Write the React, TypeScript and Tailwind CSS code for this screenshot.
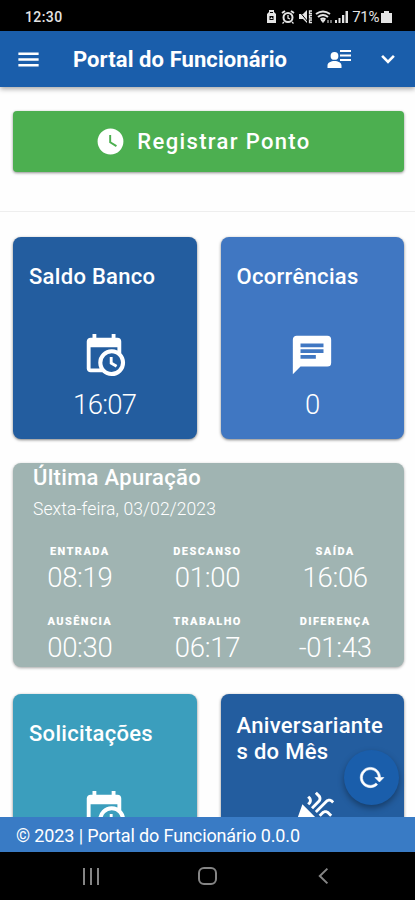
import type { ReactNode } from 'react';

const icons = {
  menu: 'M3,5.700H21V8H3V5.700M3,10.850H21V13.150H3V10.850M3,16H21V18.300H3V16Z',
  chevronDown: 'M7.41,8.28L12,12.87L16.59,8.28L18.300,10L12,16.300L5.700,10L7.41,8.28Z',
  chevronLeft: 'M15.4 4.6 L7.8 12 L15.4 19.4',
  account:
    'M13,3H24V5H13V3M13,7.500H24V9.500H13V7.500M13,12H24V14H13V12M7.500,5A3.900,3.900 0 0,1 11.400,8.900A3.900,3.900 0 0,1 7.500,12.800A3.900,3.900 0 0,1 3.600,8.900A3.900,3.900 0 0,1 7.500,5M0.500,21V18.500C0.500,15.600 4,14 7.500,14C11,14 14.500,15.600 14.500,18.500V21H0.500Z',
  clock:
    'M12,2A10,10 0 0,0 2,12A10,10 0 0,0 12,22A10,10 0 0,0 22,12A10,10 0 0,0 12,2M16.2,16.2L11,13V7H12.5V12.2L17,14.9L16.2,16.2Z',
  calendarClock:
    'M15,13H16.5V15.82L18.94,17.23L18.19,18.53L15,16.69V13M19,8H5V19H9.67C9.24,18.09 9,17.07 9,16A7,7 0 0,1 16,9C17.07,9 18.09,9.24 19,9.67V8M5,21C3.89,21 3,20.1 3,19V5C3,3.89 3.89,3 5,3H6V1H8V3H16V1H18V3H19A2,2 0 0,1 21,5V11.1C22.24,12.36 23,14.09 23,16A7,7 0 0,1 16,23C14.09,23 12.36,22.24 11.1,21H5M16,11.15A4.85,4.85 0 0,0 11.15,16C11.15,18.68 13.32,20.85 16,20.85A4.85,4.85 0 0,0 20.85,16C20.85,13.32 18.68,11.15 16,11.15Z',
  message:
    'M20,2A2,2 0 0,1 22,4V16A2,2 0 0,1 20,18H6L2,22V4C2,2.89 2.9,2 4,2H20M6,6V8H18V6H6M6,9V11H18V9H6M6,12V14H14V12H6Z',
  party:
    'M2,22L7,8L16,17L2,22M14.53,12.53L20.12,6.94C20.61,6.45 21.4,6.45 21.89,6.94L22.48,7.53L23.54,6.47L22.95,5.88C21.88,4.81 20.13,4.81 19.06,5.88L13.47,11.47L14.53,12.53M10.06,6.88L9.47,7.47L10.53,8.53L11.12,7.94C12.19,6.87 12.19,5.12 11.12,4.05L10.53,3.46L9.47,4.54L10.06,5.13C10.54,5.6 10.54,6.4 10.06,6.88M17.06,11.88L15.47,13.47L16.53,14.53L18.12,12.94C18.61,12.45 19.4,12.45 19.89,12.94L21.48,14.53L22.54,13.47L20.95,11.88C19.88,10.81 18.13,10.81 17.06,11.88M15.06,5.88L11.47,9.47L12.53,10.53L16.12,6.94C17.19,5.87 17.19,4.12 16.12,3.05L14.53,1.46L13.47,2.54L15.06,4.13C15.54,4.6 15.54,5.4 15.06,5.88Z',
  reload:
    'M2 12C2 16.97 6.03 21 11 21C13.39 21 15.68 20.06 17.4 18.4L15.9 16.9C14.63 18.25 12.86 19 11 19C4.76 19 1.64 11.46 6.05 7.05C10.46 2.64 18 5.77 18 12H15L19 16H19.1L23 12H20C20 7.03 15.97 3 11 3C6.03 3 2 7.03 2 12Z',
};

type IconProps = { path: string; className: string; bold?: boolean };

const Icon = ({ path, className, bold }: IconProps) => (
  <svg
    viewBox="0 0 24 24"
    fill="currentColor"
    fillRule="evenodd"
    stroke={bold ? 'currentColor' : 'none'}
    strokeWidth={0.5}
    className={className}
  >
    <path d={path} />
  </svg>
);

const StatusIcons = () => (
  <svg viewBox="0 0 84 16" className="h-4 w-[84px]" fill="#e4e4e4">
    <path fillRule="evenodd" d="M1 5 3 3V1h5v2l2 2v9H1V5ZM4 3v1h3V3ZM3.500 7v4h4V7Z" />
    <path d="m4 10 1.500-2L7 10Z" />
    <path d="m16 4 3-2M28 4l-3-2" stroke="#e4e4e4" strokeWidth="2" />
    <circle cx="22" cy="8.500" r="4.500" fill="none" stroke="#e4e4e4" strokeWidth="2" />
    <path d="M22 6v3l2 1M18 13l-1.500 1.500M26 13l1.500 1.500" fill="none" stroke="#e4e4e4" strokeWidth="1.3" />
    <path d="M33 5h4l4-4v13l-4-4h-4Z" />
    <path d="m33 2 9 11" stroke="#000" strokeWidth="1" />
    <path d="M46 2h-2.500v2.500H46M46 6.500h-2.500V9H46M46 11h-2.500v2.500H46" fill="none" stroke="#e4e4e4" strokeWidth="1.3" />
    <path d="M50 5q7-5 14 0M52 8q5-4 10 0M54.500 10.500q2.500-2 5 0" fill="none" stroke="#e4e4e4" strokeWidth="2" />
    <path d="m55 11 2 2.500 2-2.500ZM62 14v-3M65 14v-3" stroke="#e4e4e4" />
    <path d="M69 11h2v3h-2ZM72.500 9h2v5h-2ZM76 6h2.300v8H76ZM79.500 2H82v12h-2.500Z" />
  </svg>
);

type TileProps = { title: string; icon: string; color: string; children?: ReactNode };

const Tile = ({ title, icon, color, children }: TileProps) => (
  <section className={`flex h-[202px] flex-col items-center rounded-lg shadow-[0_1px_3px_rgba(0,0,0,0.5)] ${color}`}>
    <div className="h-[95px] w-full shrink-0">
      <div className="flex min-h-[79px] items-center px-4 py-[19px]">
        <h2 className="w-full text-[22px] leading-[26px] font-medium tracking-[0.3px] break-all">{title}</h2>
      </div>
    </div>
    <Icon path={icon} className="mr-px size-[46px] shrink-0" />
    <p className="mt-[9px] text-[27.500px] leading-[36px] font-light tracking-[-0.7px]">{children}</p>
  </section>
);

const records = [
  { label: 'Entrada', value: '08:19' },
  { label: 'Descanso', value: '01:00' },
  { label: 'Saída', value: '16:06' },
  { label: 'Ausência', value: '00:30' },
  { label: 'Trabalho', value: '06:17' },
  { label: 'Diferença', value: '-01:43' },
];

export default function App() {
  return (
    <div className="relative flex h-[900px] w-[415px] flex-col overflow-hidden bg-[#fefefe] font-['Roboto',sans-serif] text-white">
      <div className="flex h-[31px] shrink-0 items-center bg-black pr-[23px] pl-[25px] text-[14px] text-[#e4e4e4]">
        <span className="mt-[3px] font-medium tracking-[0.4px]">12:30</span>
        <div className="mt-[2px] ml-auto flex items-center">
          <StatusIcons />
          <span className="mt-px ml-[2px] text-[15px] tracking-[-0.4px]">71%</span>
          <svg viewBox="0 0 11 14" className="ml-[2px] h-[14px] w-[11px]" fill="#e4e4e4">
            <path d="M3 1h5v2h3v10H0V3h3Z" />
          </svg>
        </div>
      </div>

      <header className="z-10 flex h-14 shrink-0 items-center bg-[#1a5eab] shadow-[0_2px_5px_rgba(0,0,0,0.35)]">
        <Icon path={icons.menu} className="ml-[15px] size-[27px]" />
        <h1 className="ml-[31px] text-[22px] font-bold tracking-[0.08px]">Portal do Funcionário</h1>
        <Icon path={icons.account} className="ml-[40px] size-6" />
        <Icon path={icons.chevronDown} className="mr-[14px] ml-auto size-[26px]" />
      </header>

      <main className="min-h-0 flex-1 overflow-hidden">
        <div className="h-[125px] border-b border-[#eee] pt-6 pr-[11px] pl-[13px]">
          <button className="flex h-[61px] w-full items-center justify-center gap-[11px] rounded bg-[#4caf50] text-[22px] font-medium tracking-[1.35px] shadow-[0_1px_3px_rgba(0,0,0,0.45)]">
            <Icon path={icons.clock} className="-ml-[11px] size-[31px]" />
            Registrar Ponto
          </button>
        </div>

        <div className="pt-[25px] pr-[11px] pl-[13px]">
          <div className="grid grid-cols-2 gap-6">
            <Tile title="Saldo Banco" icon={icons.calendarClock} color="bg-[#235d9f]">16:07</Tile>
            <Tile title="Ocorrências" icon={icons.message} color="bg-[#4077c2]">0</Tile>
          </div>

          <section className="mt-6 h-[204px] rounded-lg bg-[#a0b4b2] shadow-[0_1px_3px_rgba(0,0,0,0.35)]">
            <div className="px-5">
              <h2 className="text-[22px] leading-[30px] font-medium tracking-[0.3px]">Última Apuração</h2>
              <p className="mt-[4px] text-[17.500px] leading-6 font-light tracking-[0.1px]">Sexta-feira, 03/02/2023</p>
            </div>
            <div className="mt-[21px] grid grid-cols-3 gap-y-[18px] pr-[5px] pl-[3px] text-center">
              {records.map((record) => (
                <div key={record.label}>
                  <p className="text-[11px] leading-[19px] font-black tracking-[1.4px] uppercase">{record.label}</p>
                  <p className="text-[27.500px] leading-[33px] font-light tracking-[-0.3px]">{record.value}</p>
                </div>
              ))}
            </div>
          </section>

          <div className="mt-[27px] grid grid-cols-2 gap-6">
            <Tile title="Solicitações" icon={icons.calendarClock} color="bg-[#3b9ebd]" />
            <Tile title="Aniversariantes do Mês" icon={icons.party} color="bg-[#235d9f]" />
          </div>
        </div>
      </main>

      <button className="absolute top-[750px] left-[344px] flex size-[55px] items-center justify-center rounded-full bg-[#1a5eab] shadow-[0_3px_6px_rgba(0,0,0,0.35)]">
        <Icon path={icons.reload} className="size-[27px]" bold />
      </button>

      <footer className="z-10 flex h-[35px] shrink-0 items-center bg-[#397bc5] px-4 pt-[2px] text-[18px] tracking-[-0.12px]">
        © 2023 | Portal do Funcionário 0.0.0
      </footer>

      <nav className="flex h-12 shrink-0 items-center bg-black text-[#858585]">
        <div className="ml-[83px] flex h-[17px] w-4 justify-between">
          <span className="w-[2px] bg-current" />
          <span className="w-[2px] bg-current" />
          <span className="w-[2px] bg-current" />
        </div>
        <span className="ml-[99px] h-[18px] w-[19px] rounded-[6px] border-2 border-current" />
        <svg viewBox="0 0 24 24" className="ml-[95px] size-6" fill="none" stroke="currentColor" strokeWidth="2">
          <path d={icons.chevronLeft} />
        </svg>
      </nav>
    </div>
  );
}
